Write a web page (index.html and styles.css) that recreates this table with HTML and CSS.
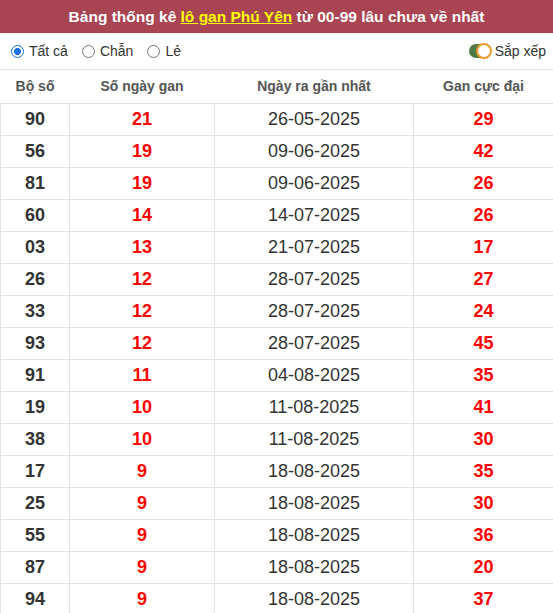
FILE: index.html
```html
<!DOCTYPE html>
<html lang="vi">
<head>
<meta charset="utf-8">
<link rel="stylesheet" href="styles.css">
</head>
<body>
<div class="box">
  <div class="title">Bảng thống kê <a class="hl" href="#">lô gan Phú Yên</a> từ 00-99 lâu chưa về nhất</div>
  <div class="opts">
    <div class="radios">
      <label class="radio"><span class="dot on"></span>Tất cả</label>
      <label class="radio"><span class="dot"></span>Chẫn</label>
      <label class="radio"><span class="dot"></span>Lẻ</label>
    </div>
    <label class="sort"><span class="toggle"><span class="knob"></span></span>Sắp xếp</label>
  </div>
  <table class="tbl">
    <colgroup><col class="c1"><col class="c2"><col class="c3"><col class="c4"></colgroup>
    <thead>
      <tr><th>Bộ số</th><th>Số ngày gan</th><th>Ngày ra gần nhất</th><th>Gan cực đại</th></tr>
    </thead>
    <tbody>
      <tr><td class="n">90</td><td class="r">21</td><td class="d">26-05-2025</td><td class="r">29</td></tr>
      <tr><td class="n">56</td><td class="r">19</td><td class="d">09-06-2025</td><td class="r">42</td></tr>
      <tr><td class="n">81</td><td class="r">19</td><td class="d">09-06-2025</td><td class="r">26</td></tr>
      <tr><td class="n">60</td><td class="r">14</td><td class="d">14-07-2025</td><td class="r">26</td></tr>
      <tr><td class="n">03</td><td class="r">13</td><td class="d">21-07-2025</td><td class="r">17</td></tr>
      <tr><td class="n">26</td><td class="r">12</td><td class="d">28-07-2025</td><td class="r">27</td></tr>
      <tr><td class="n">33</td><td class="r">12</td><td class="d">28-07-2025</td><td class="r">24</td></tr>
      <tr><td class="n">93</td><td class="r">12</td><td class="d">28-07-2025</td><td class="r">45</td></tr>
      <tr><td class="n">91</td><td class="r">11</td><td class="d">04-08-2025</td><td class="r">35</td></tr>
      <tr><td class="n">19</td><td class="r">10</td><td class="d">11-08-2025</td><td class="r">41</td></tr>
      <tr><td class="n">38</td><td class="r">10</td><td class="d">11-08-2025</td><td class="r">30</td></tr>
      <tr><td class="n">17</td><td class="r">9</td><td class="d">18-08-2025</td><td class="r">35</td></tr>
      <tr><td class="n">25</td><td class="r">9</td><td class="d">18-08-2025</td><td class="r">30</td></tr>
      <tr><td class="n">55</td><td class="r">9</td><td class="d">18-08-2025</td><td class="r">36</td></tr>
      <tr><td class="n">87</td><td class="r">9</td><td class="d">18-08-2025</td><td class="r">20</td></tr>
      <tr><td class="n">94</td><td class="r">9</td><td class="d">18-08-2025</td><td class="r">37</td></tr>
    </tbody>
  </table>
</div>
</body>
</html>
```
FILE: styles.css
```css
* { box-sizing: border-box; }
html, body { margin: 0; padding: 0; background: #fff; }
body { font-family: "Liberation Sans", Arial, sans-serif; color: #333; }
.box { width: 553px; }
.title {
  background: #a94452;
  color: #fff;
  font-weight: bold;
  font-size: 15.5px;
  text-align: center;
  height: 33px;
  line-height: 33px;
}
.hl { color: #ffff00; text-decoration: underline; }
.opts {
  height: 37px;
  display: flex;
  align-items: center;
  justify-content: space-between;
  padding: 0 7px 0 11px;
  font-size: 14px;
  border-bottom: 1px solid #e6e6e6;
}
.radios { display: flex; gap: 14px; }
.radio { display: flex; align-items: center; gap: 5px; }
.dot {
  width: 13px; height: 13px;
  border: 1px solid #767676;
  border-radius: 50%;
  display: inline-block;
}
.dot.on {
  border: 1.5px solid #1a73e8;
  background: radial-gradient(circle, #1a73e8 0 3.3px, #fff 3.8px);
}
.sort { display: flex; align-items: center; gap: 3px; }
.toggle {
  width: 22px; height: 14px;
  border-radius: 7px;
  background: #4d7a45;
  position: relative;
  display: inline-block;
  margin-right: 1px;
}
.knob {
  position: absolute;
  right: -1px; top: -1px;
  width: 16px; height: 16px;
  border-radius: 50%;
  background: #fff;
  border: 2px solid #f39a2c;
}
.tbl {
  width: 553px;
  border-collapse: collapse;
  table-layout: fixed;
}
.c1 { width: 69px; }
.c2 { width: 145px; }
.c3 { width: 199px; }
.c4 { width: 140px; }
.tbl th {
  height: 33px;
  font-size: 14px;
  font-weight: bold;
  color: #555;
  text-align: center;
  border-bottom: 1px solid #e3e3e3;
  padding: 0;
}
.tbl td {
  height: 32px;
  text-align: center;
  border: 1px solid #e3e3e3;
  font-size: 18px;
  padding: 0;
}
.n { font-weight: bold; color: #333; }
.r { font-weight: bold; color: #ff0000; }
.d { color: #333; }
```
